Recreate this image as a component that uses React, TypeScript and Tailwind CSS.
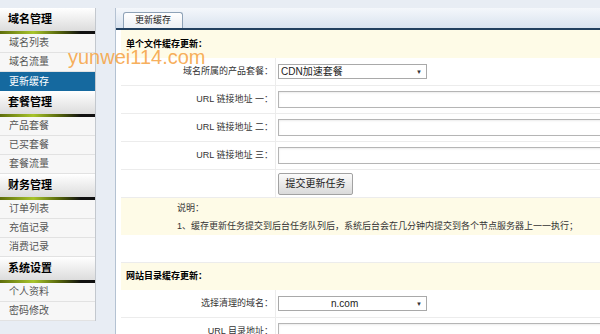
const menu = [
  { title: "域名管理", items: ["域名列表", "域名流量", "更新缓存"] },
  { title: "套餐管理", items: ["产品套餐", "已买套餐", "套餐流量"] },
  { title: "财务管理", items: ["订单列表", "充值记录", "消费记录"] },
  { title: "系统设置", items: ["个人资料", "密码修改"] },
];

const ACTIVE = "更新缓存";

function Sidebar() {
  return (
    <aside className="mt-[8px] w-[96px] shrink-0 border-r border-[#c3c8ce] bg-[#f7f7f7]">
      {menu.map((group) => (
        <div key={group.title}>
          <div className="flex h-[23px] items-center bg-gradient-to-b from-white to-[#dcdcdc] pl-[8px] text-[11px] font-bold leading-none text-black">
            {group.title}
          </div>
          <div className="h-[3px] bg-[linear-gradient(to_right,#5e6e0c_0%,#a8c42c_35%,#56660c_62%,#111_85%)]" />
          {group.items.map((item) => (
            <div
              key={item}
              className={
                item === ACTIVE
                  ? "flex h-[19px] items-center bg-[#15699f] pl-[9px] text-[10px] leading-none text-white"
                  : "flex h-[19px] items-center border-b border-[#e2e2e2] pl-[9px] text-[10px] leading-none text-[#555]"
              }
            >
              {item}
            </div>
          ))}
        </div>
      ))}
    </aside>
  );
}

function Row({ label, children }: { label: string; children?: React.ReactNode }) {
  return (
    <div className="flex h-[28px] border-b border-[#ececec]">
      <div className="flex w-[155px] shrink-0 items-center justify-end border-r border-[#ececec] pr-[2px] text-[9px] leading-none text-[#333]">
        {label}
      </div>
      <div className="flex items-center pl-[2px]">{children}</div>
    </div>
  );
}

function TextInput() {
  return (
    <div className="h-[17px] w-[340px] border border-[#b5b5b5] bg-white shadow-[inset_0_1px_2px_rgba(0,0,0,0.08)]" />
  );
}

function FakeSelect({ value, indent = 2 }: { value: string; indent?: number }) {
  return (
    <div className="flex h-[15px] w-[149px] items-center justify-between border border-[#a9a9a9] bg-white pr-[4px] text-[10px] leading-none text-[#222]">
      <span style={{ paddingLeft: indent }}>{value}</span>
      <span className="text-[6px] text-[#333]">▼</span>
    </div>
  );
}

export default function App() {
  return (
    <div className="relative flex h-[334px] w-[600px] items-start overflow-hidden bg-[#e8edf4] font-['Liberation_Sans','Noto_Sans_CJK_SC',sans-serif]">
      <Sidebar />

      <main className="ml-[19px] mt-[8px] min-w-0 flex-1 self-stretch border-l border-[#b4c2d2] bg-white">
        {/* tabs */}
        <div className="flex h-[22px] items-end border-b-2 border-[#22405f] bg-gradient-to-b from-[#f4f7fb] to-[#d9e3ef] pl-[7px]">
          <div className="flex h-[16px] w-[60px] items-center justify-center rounded-t-[3px] border border-b-0 border-[#8ea2b7] bg-gradient-to-b from-white to-[#edf0f4] text-[9px] leading-none text-[#222]">
            更新缓存
          </div>
        </div>

        <div className="pl-[5px]">
          <div className="flex h-[28px] items-center bg-[#fefbe7] pl-[5px] text-[9px] font-bold leading-none text-black">
            单个文件缓存更新：
          </div>
          <Row label="域名所属的产品套餐：">
            <FakeSelect value="CDN加速套餐" />
          </Row>
          <Row label="URL 链接地址 一：">
            <TextInput />
          </Row>
          <Row label="URL 链接地址 二：">
            <TextInput />
          </Row>
          <Row label="URL 链接地址 三：">
            <TextInput />
          </Row>
          <Row label="">
            <button className="h-[22px] w-[75px] rounded-[2px] border border-[#a2a2a2] bg-gradient-to-b from-[#fbfbfb] to-[#dadada] text-[10px] leading-none text-[#222]">
              提交更新任务
            </button>
          </Row>

          <div className="h-[37px] bg-[#fefbe7] pl-[56px] pt-[1px] text-[9px] leading-[18px] text-[#333]">
            <p>说明：</p>
            <p>1、缓存更新任务提交到后台任务队列后，系统后台会在几分钟内提交到各个节点服务器上一一执行；</p>
          </div>
          <div className="h-[28px] border-b border-[#ececec]" />

          <div className="flex h-[27px] items-center bg-[#fefbe7] pl-[5px] text-[9px] font-bold leading-none text-black">
            网站目录缓存更新：
          </div>
          <Row label="选择清理的域名：">
            <FakeSelect value="n.com" indent={52} />
          </Row>
          <Row label="URL 目录地址：">
            <TextInput />
          </Row>
        </div>
      </main>

      {/* watermark */}
      <div className="pointer-events-none absolute left-[68px] top-[47px] text-[20px] leading-none text-[#f6a547]/90">
        yunwei114.com
      </div>
    </div>
  );
}
